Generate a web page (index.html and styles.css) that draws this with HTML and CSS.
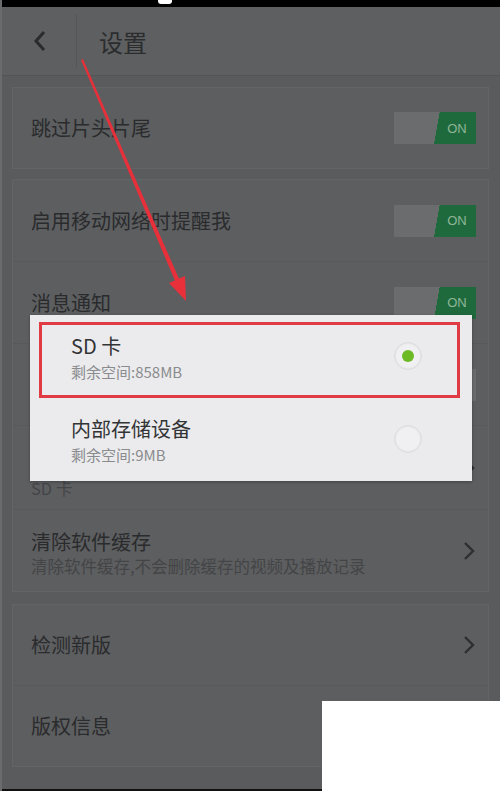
FILE: index.html
```html
<!DOCTYPE html>
<html lang="zh-CN">
<head>
    <meta charset="UTF-8">
    <meta name="viewport" content="width=device-width, initial-scale=1.0">
    <title>设置</title>
    <link rel="stylesheet" href="styles.css">
</head>
<body>
    <div class="status-bar"><span class="status-icon"></span></div>

    <div class="header">
        <div class="back">
            <svg width="14" height="22" viewBox="0 0 14 22"><polyline points="11,2 3,11 11,20" fill="none" stroke="#2a2b2c" stroke-width="3"/></svg>
        </div>
        <div class="title">设置</div>
    </div>

    <div class="main">
        <div class="card">
            <div class="row">
                <span class="label">跳过片头片尾</span>
                <div class="toggle"><span class="toggle-on">ON</span></div>
            </div>
        </div>

        <div class="card">
            <div class="row">
                <span class="label">启用移动网络时提醒我</span>
                <div class="toggle"><span class="toggle-on">ON</span></div>
            </div>
            <div class="row">
                <span class="label">消息通知</span>
                <div class="toggle"><span class="toggle-on">ON</span></div>
            </div>
            <!-- 被弹窗遮住的一行 -->
            <div class="row">
                <span class="label"></span>
                <div class="toggle off"></div>
            </div>
            <div class="row tall">
                <div class="text">
                    <span class="label"></span>
                    <span class="sub">SD 卡</span>
                </div>
                <svg class="chevron" width="12" height="20" viewBox="0 0 12 20"><polyline points="2,2 10,10 2,18" fill="none" stroke="#2e2f30" stroke-width="2.4"/></svg>
            </div>
            <div class="row">
                <div class="text">
                    <span class="label">清除软件缓存</span>
                    <span class="sub">清除软件缓存,不会删除缓存的视频及播放记录</span>
                </div>
                <svg class="chevron" width="12" height="20" viewBox="0 0 12 20"><polyline points="2,2 10,10 2,18" fill="none" stroke="#2e2f30" stroke-width="2.4"/></svg>
            </div>
        </div>

        <div class="card">
            <div class="row short">
                <span class="label">检测新版</span>
                <svg class="chevron" width="12" height="20" viewBox="0 0 12 20"><polyline points="2,2 10,10 2,18" fill="none" stroke="#2e2f30" stroke-width="2.4"/></svg>
            </div>
            <div class="row short">
                <span class="label">版权信息</span>
            </div>
        </div>
    </div>

    <div class="bottom-bar"></div>

    <!-- 存储位置选择弹窗 -->
    <div class="dialog">
        <div class="option selected">
            <div class="option-text">
                <span class="option-title">SD 卡</span>
                <span class="option-sub">剩余空间:858MB</span>
            </div>
            <span class="radio checked"></span>
        </div>
        <div class="option">
            <div class="option-text">
                <span class="option-title">内部存储设备</span>
                <span class="option-sub">剩余空间:9MB</span>
            </div>
            <span class="radio"></span>
        </div>
    </div>

    <svg class="arrow" width="500" height="791" viewBox="0 0 500 791">
        <polygon points="79,60 81,59 178,281 174,283" fill="#e8303a"/>
        <polygon points="184,301 167,283 183,276" fill="#e8303a"/>
    </svg>

    <div class="blank"></div>
</body>
</html>
```

FILE: styles.css
```css
body {
    margin: 0;
    padding: 0;
    width: 500px;
    height: 791px;
    overflow: hidden;
    position: relative;
    background-color: #5a5b5d;
    font-family: "Noto Sans CJK SC", "Noto Sans", sans-serif;
    color: #2a2b2d;
    border-left: 2px solid #6a6b6d;
    box-sizing: border-box;
}

.status-bar {
    height: 7px;
    background-color: #000;
    position: relative;
}

.status-icon {
    position: absolute;
    left: 156px;
    top: 0;
    width: 14px;
    height: 4px;
    background-color: #fff;
    border-radius: 0 0 3px 3px;
}

.header {
    height: 68px;
    display: flex;
    align-items: center;
    background-color: #5e5f61;
    border-bottom: 1px solid #535456;
}

.back {
    width: 75px;
    height: 54px;
    display: flex;
    align-items: center;
    padding-left: 31px;
    box-sizing: border-box;
    border-right: 1px solid #555658;
}

.title {
    font-size: 24px;
    padding-left: 22px;
    color: #2b2c2e;
}

.main {
    padding: 11px 11px 0 10px;
    display: flex;
    flex-direction: column;
    gap: 10px;
}

.card {
    background-color: #5d5e60;
    border: 1px solid #636466;
}

.card:last-child {
    margin-top: 2px;
}

.row {
    height: 81px;
    display: flex;
    align-items: center;
    justify-content: space-between;
    padding: 0 12px 0 18px;
    border-bottom: 1px solid #58595b;
}

.row:last-child {
    border-bottom: none;
}

.card:first-child .row {
    height: 80px;
}

.row.tall {
    height: 83px;
}

.row.tall .text {
    padding-top: 14px;
}

.row.short {
    height: 80px;
}

.label {
    font-size: 20px;
    line-height: 26px;
    min-height: 26px;
}

.text {
    display: flex;
    flex-direction: column;
    padding-top: 4px;
}

.sub {
    font-size: 16.5px;
    line-height: 22px;
    color: #444547;
}

.chevron {
    margin-right: 1px;
}

.toggle {
    width: 82px;
    height: 32px;
    background: linear-gradient(100deg, #6b6c6d 52%, #1f6a3d 52.2%);
    display: flex;
    align-items: center;
    justify-content: flex-end;
}

.toggle.off {
    background: linear-gradient(100deg, #4f5052 48%, #6b6c6d 48.2%);
}

.toggle-on {
    width: 38px;
    text-align: center;
    font-size: 13px;
    color: #8fb598;
    font-family: "Liberation Sans", sans-serif;
}

.bottom-bar {
    position: absolute;
    left: 0;
    right: 0;
    bottom: 0;
    height: 2px;
    background-color: #111;
}

.dialog {
    position: absolute;
    left: 28px;
    top: 315px;
    width: 442px;
    height: 166px;
    background-color: #ebebed;
    box-shadow: 0 1px 3px rgba(0, 0, 0, 0.3);
    padding-top: 7px;
    box-sizing: border-box;
    overflow: hidden;
}

.option {
    height: 76px;
    margin: 0 12px 0 9px;
    display: flex;
    align-items: center;
    justify-content: space-between;
    padding: 0 38px 0 32px;
    box-sizing: border-box;
}

.option + .option {
    margin-top: 7px;
}

.option.selected {
    border: 3px solid #e03a42;
    padding-left: 29px;
    padding-right: 35px;
}

.option-text {
    display: flex;
    flex-direction: column;
    margin-bottom: 3px;
}

.option-title {
    font-size: 20px;
    line-height: 26px;
    color: #333436;
}

.option-sub {
    font-size: 15px;
    line-height: 26px;
    color: #8a8b8d;
}

.radio {
    width: 26px;
    height: 26px;
    border-radius: 50%;
    border: 1px solid #dcdcde;
    box-shadow: inset 0 0 2px #d4d4d6;
    background-color: #f0f0f2;
    display: flex;
    align-items: center;
    justify-content: center;
    margin-bottom: 8px;
}

.radio.checked::after {
    content: "";
    width: 12px;
    height: 12px;
    border-radius: 50%;
    background-color: #6cbb24;
}

.arrow {
    position: absolute;
    left: 0;
    top: 0;
    pointer-events: none;
}

.blank {
    position: absolute;
    left: 320px;
    top: 701px;
    right: 0;
    bottom: 0;
    background-color: #fff;
}
```
